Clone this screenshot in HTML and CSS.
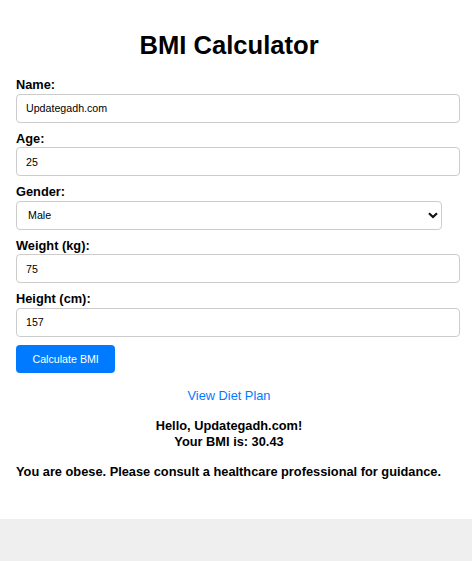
FILE: index.html
```html
<!DOCTYPE html>
<html lang="en">
<head>
<meta charset="utf-8">
<title>BMI Calculator</title>
<link rel="stylesheet" href="styles.css">
</head>
<body>
<div class="container">
  <h1 class="title">BMI Calculator</h1>
  <form class="form">
    <label class="label" for="name">Name:</label>
    <input class="field" id="name" type="text" value="Updategadh.com">
    <label class="label" for="age">Age:</label>
    <input class="field" id="age" type="text" value="25">
    <label class="label" for="gender">Gender:</label>
    <div class="select-wrap">
      <select class="select" id="gender">
        <option>Male</option>
        <option>Female</option>
      </select>
      <svg class="chevron" width="10" height="7" viewBox="0 0 10 7"><path d="M1 1.3 L5 5 L9 1.3" fill="none" stroke="#111" stroke-width="2.2"/></svg>
    </div>
    <label class="label" for="weight">Weight (kg):</label>
    <input class="field" id="weight" type="text" value="75">
    <label class="label" for="height">Height (cm):</label>
    <input class="field" id="height" type="text" value="157">
    <button class="btn" type="button">Calculate BMI</button>
  </form>
  <a class="diet-link" href="#">View Diet Plan</a>
  <p class="result">Hello, Updategadh.com!<br>Your BMI is: 30.43</p>
  <p class="advice">You are obese. Please consult a healthcare professional for guidance.</p>
</div>
</body>
</html>
```

FILE: styles.css
```css
html, body {
  margin: 0;
  padding: 0;
}
body {
  background: #efefef;
  font-family: "Liberation Sans", Arial, sans-serif;
  color: #000;
}
.container {
  background: #fff;
  padding: 14px 30px 40px 16px;
  box-shadow: 0 0 10px rgba(0, 0, 0, 0.16);
}
.title {
  font-size: 25.6px;
  font-weight: bold;
  text-align: center;
  margin: 17px 0;
  line-height: normal;
}
.form {
  margin: 0;
}
.label {
  display: block;
  font-size: 12.8px;
  font-weight: bold;
  margin-bottom: 1.5px;
}
.field {
  display: block;
  box-sizing: content-box;
  width: 100%;
  height: 27px;
  padding: 0 7px 0 9px;
  margin: 0 0 8px 0;
  border: 1px solid #cccccc;
  border-radius: 4px;
  font-family: "Liberation Sans", Arial, sans-serif;
  font-size: 10.67px;
  color: #000;
  background: #fff;
  outline: none;
}
.select-wrap {
  position: relative;
  margin-bottom: 8px;
}
.select {
  display: block;
  box-sizing: border-box;
  width: 100%;
  height: 29px;
  padding: 0 20px 0 11px;
  border: 1px solid #cccccc;
  border-radius: 4px;
  background: #fff;
  font-family: "Liberation Sans", Arial, sans-serif;
  font-size: 10.67px;
  color: #000;
  -webkit-appearance: none;
  appearance: none;
  outline: none;
}
.chevron {
  position: absolute;
  right: 4px;
  top: 11px;
  pointer-events: none;
}
.btn {
  display: block;
  margin-top: 0.6px;
  padding: 8px 16.5px;
  border: none;
  border-radius: 4px;
  background: #007bff;
  color: #fff;
  font-family: "Liberation Sans", Arial, sans-serif;
  font-size: 10.67px;
  line-height: normal;
  cursor: pointer;
}
.diet-link {
  display: block;
  margin-top: 15px;
  text-align: center;
  color: #007bff;
  text-decoration: none;
  font-size: 12.8px;
}
.result {
  margin: 15.4px 0 0 0;
  text-align: center;
  font-weight: bold;
  font-size: 12.8px;
  line-height: 16px;
}
.advice {
  margin: 14.6px 0 0 0;
  font-weight: bold;
  font-size: 12.8px;
}
```
